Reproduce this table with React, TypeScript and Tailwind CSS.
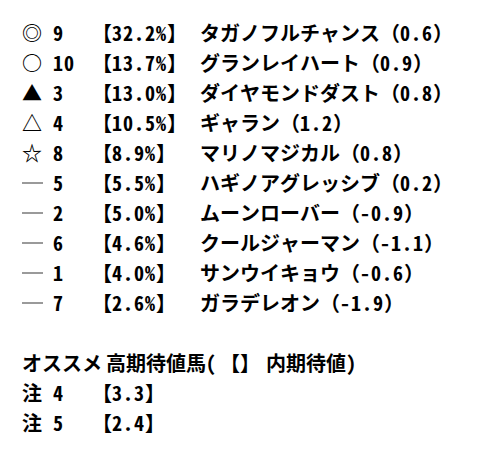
import React from "react";

type Row = { mark: string; num: string; pct: string; name: string; val: string };

const rows: Row[] = [
  { mark: "◎", num: "9", pct: "32.2%", name: "タガノフルチャンス", val: "0.6" },
  { mark: "○", num: "10", pct: "13.7%", name: "グランレイハート", val: "0.9" },
  { mark: "▲", num: "3", pct: "13.0%", name: "ダイヤモンドダスト", val: "0.8" },
  { mark: "△", num: "4", pct: "10.5%", name: "ギャラン", val: "1.2" },
  { mark: "☆", num: "8", pct: "8.9%", name: "マリノマジカル", val: "0.8" },
  { mark: "-", num: "5", pct: "5.5%", name: "ハギノアグレッシブ", val: "0.2" },
  { mark: "-", num: "2", pct: "5.0%", name: "ムーンローバー", val: "-0.9" },
  { mark: "-", num: "6", pct: "4.6%", name: "クールジャーマン", val: "-1.1" },
  { mark: "-", num: "1", pct: "4.0%", name: "サンウイキョウ", val: "-0.6" },
  { mark: "-", num: "7", pct: "2.6%", name: "ガラデレオン", val: "-1.9" },
];

const font = {
  fontFamily: "'Noto Sans Mono CJK JP', 'Noto Sans CJK JP', sans-serif",
};

function Mark({ m }: { m: string }) {
  if (m === "-") {
    return (
      <span className="flex h-[30px] w-[33px] items-center">
        <span className="ml-[2px] block h-[2px] w-[21px] bg-[#9a9a9a]" />
      </span>
    );
  }
  return <span className="w-[33px] pl-[2px]">{m}</span>;
}

function Bracket({ v }: { v: string }) {
  return (
    <span>
      【<span className="tracking-[1px]">{v}</span>】
    </span>
  );
}

export default function App() {
  return (
    <div
      className="min-h-[464px] w-[482px] bg-white pl-[20px] pt-[18px] text-[20px] font-bold leading-[30px] text-black"
      style={font}
    >
      {rows.map((r, i) => (
        <div key={i} className="flex h-[30px] whitespace-nowrap">
          <Mark m={r.mark} />
          <span className="w-[39px] tracking-[1px]">{r.num}</span>
          <span className="w-[108px]">
            <Bracket v={r.pct} />
          </span>
          <span>
            {r.name}（<span className="tracking-[1px]">{r.val}</span>）
          </span>
        </div>
      ))}
      <div className="h-[30px]" />
      <div className="flex h-[30px] whitespace-nowrap">
        <span className="pl-[2px]">オススメ</span>
        <span className="ml-[4px]">高期待値馬</span>
        <span>(</span>
        <span className="ml-[4px]">【】</span>
        <span className="ml-[6px]">内期待値</span>
        <span>)</span>
      </div>
      <div className="flex h-[30px] whitespace-nowrap">
        <span className="w-[33px] pl-[2px]">注</span>
        <span className="w-[39px]">4</span>
        <Bracket v="3.3" />
      </div>
      <div className="flex h-[30px] whitespace-nowrap">
        <span className="w-[33px] pl-[2px]">注</span>
        <span className="w-[39px]">5</span>
        <Bracket v="2.4" />
      </div>
    </div>
  );
}
